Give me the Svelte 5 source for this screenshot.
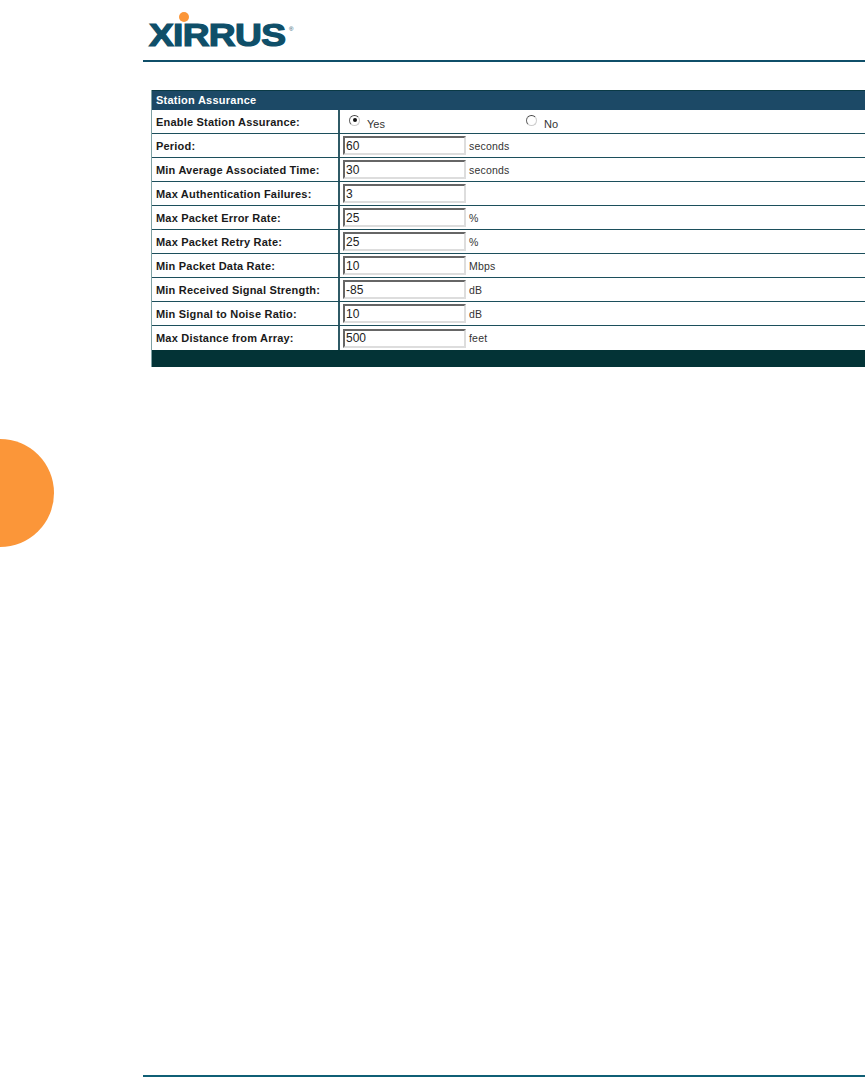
<script lang="ts">
  const rows = [
    { label: "Period:", value: "60", unit: "seconds" },
    { label: "Min Average Associated Time:", value: "30", unit: "seconds" },
    { label: "Max Authentication Failures:", value: "3", unit: "" },
    { label: "Max Packet Error Rate:", value: "25", unit: "%" },
    { label: "Max Packet Retry Rate:", value: "25", unit: "%" },
    { label: "Min Packet Data Rate:", value: "10", unit: "Mbps" },
    { label: "Min Received Signal Strength:", value: "-85", unit: "dB" },
    { label: "Min Signal to Noise Ratio:", value: "10", unit: "dB" },
    { label: "Max Distance from Array:", value: "500", unit: "feet" },
  ];
</script>

<div class="page">
  <div class="tab"></div>

  <header class="header">
    <div class="logo">
      <span class="dot"></span>
      <span class="word">XIRRUS</span><span class="reg">®</span>
    </div>
  </header>

  <section class="panel">
    <div class="title">Station Assurance</div>

    <div class="row">
      <div class="label">Enable Station Assurance:</div>
      <div class="field radios">
        <div class="radio-item yes">
          <span class="radio on"></span>
          <span class="radio-text">Yes</span>
        </div>
        <div class="radio-item">
          <span class="radio"></span>
          <span class="radio-text">No</span>
        </div>
      </div>
    </div>

    {#each rows as row}
      <div class="row">
        <div class="label">{row.label}</div>
        <div class="field">
          <input class="input" type="text" value={row.value} readonly />
          <span class="unit">{row.unit}</span>
        </div>
      </div>
    {/each}

    <div class="footer"></div>
  </section>

  <div class="bottom-rule"></div>
</div>

<style>
  :global(body) {
    background: #fff;
    overflow: hidden;
  }

  .page {
    position: relative;
    width: 865px;
    height: 1077px;
    overflow: hidden;
    font-family: "Liberation Sans", Arial, sans-serif;
    display: flex;
    flex-direction: column;
  }

  .tab {
    position: absolute;
    left: -54px;
    top: 439px;
    width: 108px;
    height: 108px;
    border-radius: 50%;
    background: #fb9639;
  }

  .header {
    margin-left: 143px;
    height: 60px;
    border-bottom: 2px solid #0f4f69;
    flex: none;
  }

  .logo {
    position: relative;
    margin-left: 5px;
    height: 60px;
  }

  .dot {
    position: absolute;
    left: 31px;
    top: 12px;
    width: 10px;
    height: 10px;
    border-radius: 50%;
    background: #fb9639;
  }

  .word {
    position: absolute;
    left: 1px;
    top: 20px;
    font-size: 31px;
    line-height: 31px;
    font-weight: 700;
    color: #0f4f69;
    -webkit-text-stroke: 1.2px #0f4f69;
    transform: scaleX(1.2);
    transform-origin: left top;
    letter-spacing: -0.6px;
  }

  .reg {
    position: absolute;
    left: 141px;
    top: 26px;
    font-size: 6px;
    line-height: 6px;
    color: #0f4f69;
  }

  .panel {
    margin: 28px 0 0 151px;
    flex: none;
    border-left: 1px solid #7ea1a3;
  }

  .title {
    height: 19px;
    line-height: 18px;
    padding-left: 4px;
    background: #1c4966;
    border-top: 1px solid #0a3a45;
    font-size: 11px;
    font-weight: 700;
    color: #fff;
    letter-spacing: 0.25px;
  }

  .row {
    display: flex;
    height: 23px;
    border-bottom: 1px solid #1c4f5c;
  }

  .row:nth-last-child(2) {
    border-bottom: none;
    height: 24px;
  }

  .label {
    width: 188px;
    box-sizing: border-box;
    padding-left: 4px;
    border-right: 2px solid #2f5a66;
    font-size: 11px;
    font-weight: 700;
    line-height: 24px;
    color: #1a1a1a;
    letter-spacing: 0.2px;
    white-space: nowrap;
  }

  .field {
    display: flex;
    align-items: center;
    padding-left: 3px;
    min-width: 0;
    flex: 1;
  }

  .radios {
    padding-left: 9px;
  }

  .radio-item {
    display: flex;
    align-items: flex-start;
    gap: 7px;
    font-size: 11px;
    color: #333;
  }

  .radio-item.yes {
    width: 177px;
  }

  .radio {
    position: relative;
    width: 11px;
    height: 11px;
    box-sizing: border-box;
    border: 1px solid #666;
    border-top-color: #444;
    border-bottom-color: #ccc;
    border-right-color: #ccc;
    border-radius: 50%;
    background: #fff;
    margin-top: 1px;
  }

  .radio.on::after {
    content: "";
    position: absolute;
    left: 2.5px;
    top: 2.5px;
    width: 4px;
    height: 4px;
    border-radius: 50%;
    background: #111;
  }

  .radio-text {
    margin-top: 4px;
    line-height: 12px;
  }

  .input {
    width: 123px;
    height: 19px;
    box-sizing: border-box;
    margin: 0;
    padding: 0 0 0 1px;
    border: 2px solid;
    border-color: #666 #ddd #ddd #666;
    background: #fff;
    font-family: "Liberation Sans", Arial, sans-serif;
    font-size: 12px;
    color: #222;
    outline: none;
  }

  .unit {
    margin-left: 3px;
    font-size: 10.5px;
    color: #333;
    letter-spacing: 0.2px;
  }

  .footer {
    height: 17px;
    background: #033336;
  }

  .bottom-rule {
    position: absolute;
    left: 143px;
    right: 0;
    top: 1075px;
    height: 2px;
    background: #0f5f75;
  }
</style>
